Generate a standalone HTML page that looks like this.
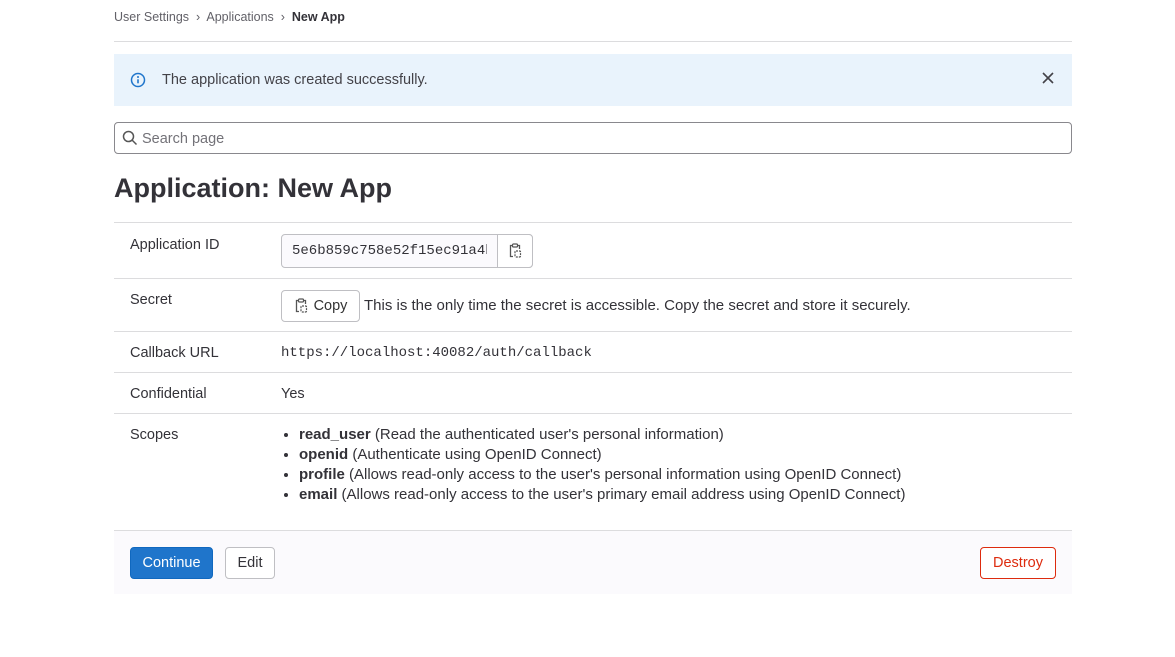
<!DOCTYPE html>
<html><head><style>
*{box-sizing:border-box;margin:0;padding:0}
body{width:1175px;height:657px;background:#fff;font-family:"Liberation Sans",sans-serif;color:#333238;font-size:14.5px;position:relative}
.a{position:absolute}
.row{position:absolute;left:114px;width:958px;border-top:1px solid #dcdcde}
.lab{position:absolute;left:16px}
.btn{position:absolute;border:1px solid #bfbfc3;border-radius:4px;background:#fff;font-size:14.5px;display:flex;align-items:center;justify-content:center}
li{margin-left:18px;line-height:20px}
</style></head><body>
<div class="a" style="left:114px;top:10px;font-size:12.5px;color:#626168">User Settings &nbsp;›&nbsp; Applications &nbsp;›&nbsp; <b style="color:#333238">New App</b></div>
<div class="a" style="left:114px;top:41px;width:958px;border-top:1px solid #dcdcde"></div>
<div class="a" style="left:114px;top:54px;width:958px;height:52px;background:#e9f3fc"></div>
<svg class="a" style="left:130px;top:72px" width="16" height="16" viewBox="0 0 16 16"><circle cx="8" cy="8" r="6.5" fill="none" stroke="#1f75cb" stroke-width="1.5"/><circle cx="8" cy="5" r="1" fill="#1f75cb"/><path d="M8 7.3v4" stroke="#1f75cb" stroke-width="1.6"/></svg>
<div class="a" style="left:162px;top:72px;font-size:14.5px;color:#434248">The application was created successfully.</div>
<svg class="a" style="left:1042px;top:72px" width="12" height="12" viewBox="0 0 12 12"><path d="M1 1l10 10M11 1L1 11" stroke="#434248" stroke-width="1.6"/></svg>
<div class="a" style="left:114px;top:122px;width:958px;height:32px;border:1px solid #89888d;border-radius:4px"></div>
<svg class="a" style="left:122px;top:130px" width="16" height="16" viewBox="0 0 16 16"><circle cx="6.5" cy="6.5" r="5" fill="none" stroke="#555" stroke-width="1.5"/><path d="M10 10l4.5 4.5" stroke="#555" stroke-width="1.5"/></svg>
<div class="a" style="left:142px;top:131px;font-size:14.5px;color:#737278">Search page</div>
<div class="a" style="left:114px;top:173px;font-size:27px;font-weight:bold;color:#333238">Application: New App</div>
<div class="row" style="top:222px;height:56px"><div class="lab" style="top:14px">Application ID</div>
<div class="a" style="left:167px;top:11px;width:252px;height:34px;border:1px solid #bfbfc3;border-radius:4px;background:#fbfafd;overflow:hidden"><div style="position:absolute;left:10px;top:8px;font-family:'Liberation Mono',monospace;font-size:14px;white-space:nowrap;width:195px;overflow:hidden">5e6b859c758e52f15ec91a4b</div></div>
<div class="a" style="left:383px;top:11px;width:36px;height:34px;background:#fff;border-radius:0 4px 4px 0;border:1px solid #bfbfc3"></div>
<svg class="a" style="left:394px;top:20px" width="14" height="16" viewBox="0 0 14 16"><path d="M4 2.5H2.5v11H5M10 2.5h1.5V6" fill="none" stroke="#555" stroke-width="1.3"/><rect x="4.5" y="1" width="5" height="3" rx="1" fill="none" stroke="#555" stroke-width="1.2"/><rect x="7" y="8" width="5.5" height="6" rx="1" fill="none" stroke="#555" stroke-width="1.2" stroke-dasharray="2 1"/></svg></div>
<div class="row" style="top:278px;height:53px"><div class="lab" style="top:13px">Secret</div>
<div class="btn" style="left:167px;top:11px;width:79px;height:32px;color:#333"><svg width="14" height="16" viewBox="0 0 14 16" style="margin-right:6px"><path d="M4 2.5H2.5v11H5M10 2.5h1.5V6" fill="none" stroke="#555" stroke-width="1.3"/><rect x="4.5" y="1" width="5" height="3" rx="1" fill="none" stroke="#555" stroke-width="1.2"/><rect x="7" y="8" width="5.5" height="6" rx="1" fill="none" stroke="#555" stroke-width="1.2" stroke-dasharray="2 1"/></svg>Copy</div>
<div class="a" style="left:250px;top:18px;font-size:15px">This is the only time the secret is accessible. Copy the secret and store it securely.</div></div>
<div class="row" style="top:331px;height:41px"><div class="lab" style="top:13px">Callback URL</div>
<div class="a" style="left:167px;top:13px;font-family:'Liberation Mono',monospace;font-size:14px">https://localhost:40082/auth/callback</div></div>
<div class="row" style="top:372px;height:41px"><div class="lab" style="top:13px">Confidential</div><div class="a" style="left:167px;top:13px">Yes</div></div>
<div class="row" style="top:413px;height:117px"><div class="lab" style="top:13px">Scopes</div>
<ul class="a" style="left:167px;top:11px;font-size:15px;white-space:nowrap">
<li><b>read_user</b> (Read the authenticated user's personal information)</li>
<li><b>openid</b> (Authenticate using OpenID Connect)</li>
<li><b>profile</b> (Allows read-only access to the user's personal information using OpenID Connect)</li>
<li><b>email</b> (Allows read-only access to the user's primary email address using OpenID Connect)</li></ul></div>
<div class="row" style="top:530px;height:64px;background:#fbfafd">
<div class="btn" style="left:16px;top:16px;width:83px;height:32px;background:#1f75cb;border-color:#1068bf;color:#fff">Continue</div>
<div class="btn" style="left:111px;top:16px;width:50px;height:32px">Edit</div>
<div class="btn" style="left:866px;top:16px;width:76px;height:32px;border-color:#dd2b0e;color:#dd2b0e">Destroy</div></div>
</body></html>
